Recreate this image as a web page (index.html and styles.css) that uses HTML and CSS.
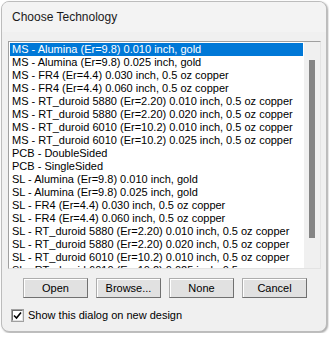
FILE: index.html
```html
<!DOCTYPE html>
<html lang="en">
<head>
    <meta charset="UTF-8">
    <title>Choose Technology</title>
    <link rel="stylesheet" href="styles.css">
</head>
<body>

<div class="dialog">
    <div class="titlebar">Choose Technology</div>

    <div class="content">
        <!-- technology list -->
        <div class="listbox">
            <div class="items">
                <div class="item selected">MS - Alumina (Er=9.8) 0.010 inch, gold</div>
                <div class="item">MS - Alumina (Er=9.8) 0.025 inch, gold</div>
                <div class="item">MS - FR4 (Er=4.4) 0.030 inch, 0.5 oz copper</div>
                <div class="item">MS - FR4 (Er=4.4) 0.060 inch, 0.5 oz copper</div>
                <div class="item">MS - RT_duroid 5880 (Er=2.20) 0.010 inch, 0.5 oz copper</div>
                <div class="item">MS - RT_duroid 5880 (Er=2.20) 0.020 inch, 0.5 oz copper</div>
                <div class="item">MS - RT_duroid 6010 (Er=10.2) 0.010 inch, 0.5 oz copper</div>
                <div class="item">MS - RT_duroid 6010 (Er=10.2) 0.025 inch, 0.5 oz copper</div>
                <div class="item">PCB - DoubleSided</div>
                <div class="item">PCB - SingleSided</div>
                <div class="item">SL - Alumina (Er=9.8) 0.010 inch, gold</div>
                <div class="item">SL - Alumina (Er=9.8) 0.025 inch, gold</div>
                <div class="item">SL - FR4 (Er=4.4) 0.030 inch, 0.5 oz copper</div>
                <div class="item">SL - FR4 (Er=4.4) 0.060 inch, 0.5 oz copper</div>
                <div class="item">SL - RT_duroid 5880 (Er=2.20) 0.010 inch, 0.5 oz copper</div>
                <div class="item">SL - RT_duroid 5880 (Er=2.20) 0.020 inch, 0.5 oz copper</div>
                <div class="item">SL - RT_duroid 6010 (Er=10.2) 0.010 inch, 0.5 oz copper</div>
                <div class="item">SL - RT_duroid 6010 (Er=10.2) 0.025 inch, 0.5 oz copper</div>
            </div>
            <div class="scrollbar">
                <div class="thumb"></div>
            </div>
        </div>

        <div class="buttons">
            <button type="button">Open</button>
            <button type="button">Browse...</button>
            <button type="button">None</button>
            <button type="button">Cancel</button>
        </div>

        <label class="check">
            <span class="box">
                <svg width="9" height="9" viewBox="0 0 9 9"><path d="M1 4.5 L3.5 7 L8 1.5" fill="none" stroke="#000" stroke-width="1.6"/></svg>
            </span>
            Show this dialog on new design
        </label>
    </div>
</div>

</body>
</html>
```

FILE: styles.css
```css
body {
    margin: 0;
    background: #ffffff;
    font-family: "Liberation Sans", Arial, sans-serif;
    font-size: 11px;
    color: #000;
}
.dialog {
    margin: 1px;
    width: 324px;
    height: 329px;
    border: 1px solid #bcbcbc;
    border-radius: 8px;
    background: #f0f0f0;
    overflow: hidden;
    box-shadow: 1px 1px 2px rgba(0, 0, 0, 0.35);
}
.titlebar {
    height: 30px;
    line-height: 30px;
    padding-left: 10px;
    background: #f3f3f3;
    font-size: 12px;
    color: #1a1a1a;
}
.content {
    padding: 9px 6px 0 6px;
}
.listbox {
    display: flex;
    width: 311px;
    height: 226px;
    border-top: 1px solid #a0a0a0;
    border-left: 1px solid #a0a0a0;
    border-right: 1px solid #e3e3e3;
    border-bottom: 1px solid #e3e3e3;
}
.items {
    flex: 1;
    background: #fff;
    padding: 1px 0 0 1px;
    overflow: hidden;
}
.item {
    height: 13px;
    line-height: 13px;
    padding-left: 2px;
    white-space: nowrap;
    margin-right: 1px;
}
.item.selected {
    background: #0078d7;
    color: #fff;
}
.scrollbar {
    width: 16px;
    background: #f0f0f0;
    padding: 18px 0 30px 5px;
    box-sizing: border-box;
}
.thumb {
    width: 6px;
    height: 100%;
    background: #858585;
}
.buttons {
    display: flex;
    gap: 8px;
    margin: 9px 0 0 15px;
}
button {
    width: 65px;
    height: 20px;
    padding: 0;
    font-family: "Liberation Sans", Arial, sans-serif;
    font-size: 11px;
    color: #000;
    background: #e1e1e1;
    border: 1px solid #adadad;
    border-right-color: #707070;
    border-bottom-color: #707070;
    box-shadow: inset 1px 1px 0 #fff;
}
.check {
    display: flex;
    align-items: center;
    gap: 5px;
    margin: 11px 0 0 4px;
}
.box {
    display: flex;
    align-items: center;
    justify-content: center;
    width: 9px;
    height: 9px;
    background: #fff;
    border-top: 1px solid #6d6d6d;
    border-left: 1px solid #6d6d6d;
    border-right: 1px solid #e3e3e3;
    border-bottom: 1px solid #e3e3e3;
    box-shadow: 0 0 0 1px #a0a0a0;
}
```
